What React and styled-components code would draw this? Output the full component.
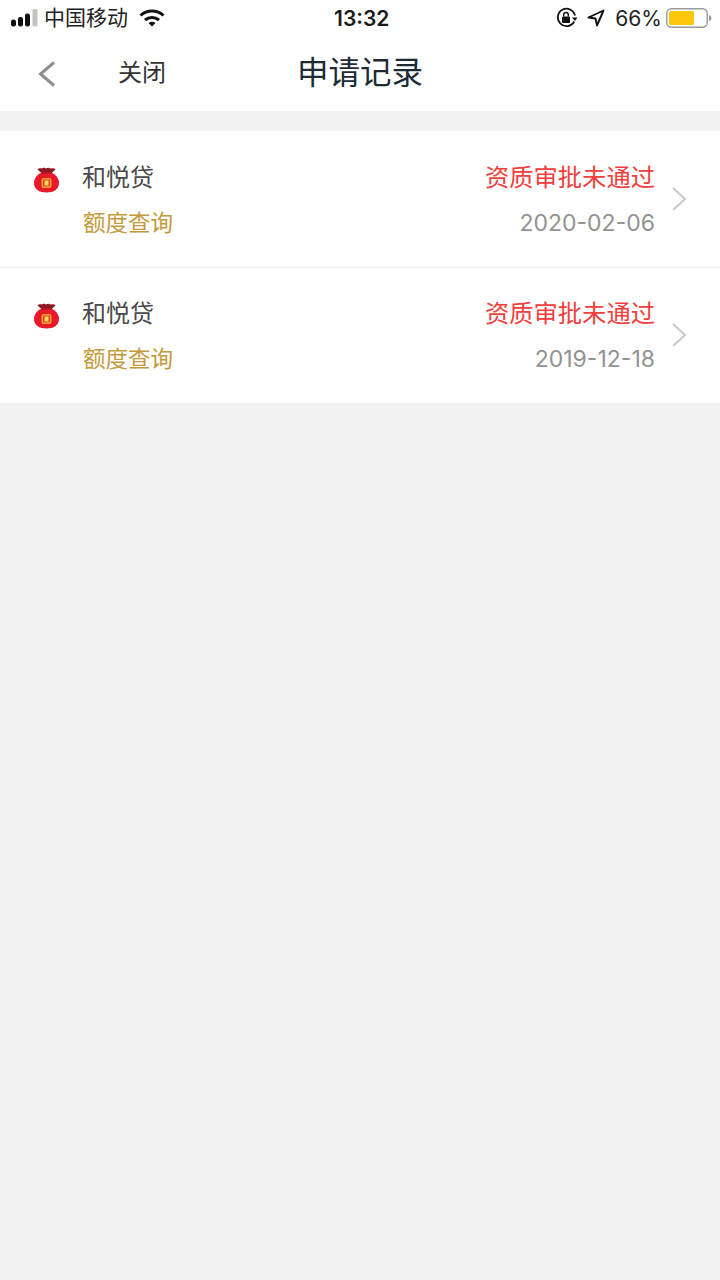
import React from "react";
import styled, { createGlobalStyle } from "styled-components";

const GlobalStyle = createGlobalStyle`
  html, body {
    margin: 0;
    padding: 0;
    background: #f2f2f2;
  }
  body {
    font-family: "Liberation Sans", "Noto Sans CJK SC", sans-serif;
  }
`;

const Page = styled.div`
  width: 720px;
  height: 1280px;
  background: #f2f2f2;
  overflow: hidden;
`;

const Top = styled.header`
  background: #fff;
`;

const StatusBar = styled.div`
  height: 36px;
  display: flex;
  align-items: center;
  justify-content: space-between;
  padding: 0 8px 0 10px;
  color: #111;
  position: relative;
`;

const StatusSide = styled.div`
  display: flex;
  align-items: center;
`;

const Carrier = styled.span`
  font-size: 21px;
  margin-left: 6px;
  margin-right: 11px;
  line-height: 36px;
  color: #222;
`;

const Clock = styled.span`
  font-family: Inter, "Liberation Sans", sans-serif;
  font-size: 21px;
  font-weight: 600;
  line-height: 25px;
  color: #1a1a1a;
  position: absolute;
  left: 334px;
  top: 6px;
`;

const Percent = styled.span`
  font-family: Inter, "Liberation Sans", sans-serif;
  font-size: 21px;
  margin: 0 4px 0 10px;
  color: #222;
`;

const NavBar = styled.nav`
  height: 75px;
  display: flex;
  align-items: center;
  position: relative;
`;

const BackButton = styled.div`
  width: 118px;
  padding-left: 37px;
  box-sizing: border-box;
  display: flex;
  align-items: center;
`;

const CloseText = styled.span`
  font-size: 24px;
  color: #333;
  position: relative;
  top: -3px;
`;

const Title = styled.h1`
  position: absolute;
  left: 297px;
  top: 15px;
  margin: 0;
  font-size: 31.5px;
  line-height: 44px;
  font-weight: 400;
  color: #1c2b36;
`;

const List = styled.section`
  margin-top: 20px;
  background: #fff;
`;

const Row = styled.div`
  height: 136px;
  box-sizing: border-box;
  display: flex;
  align-items: flex-start;
  padding: 24px 33px 0 34px;

  & + & {
    border-top: 1px solid #f0f0f0;
    padding-top: 23px;
  }
`;

const IconWrap = styled.div`
  width: 25px;
  height: 26px;
  margin-top: 12px;
  margin-right: 23px;
  flex: none;
`;

const Info = styled.div`
  flex: 1;
`;

const Name = styled.div`
  font-size: 24px;
  line-height: 46px;
  color: #4a4a4a;
`;

const Kind = styled.div`
  font-size: 22.5px;
  line-height: 46px;
  color: #c49a3c;
  margin-left: 1px;
`;

const Result = styled.div`
  text-align: right;
  margin-right: 16px;
`;

const Status = styled.div`
  font-size: 24.3px;
  line-height: 46px;
  color: #f0403c;
`;

const DateText = styled.div`
  font-family: Inter, "Liberation Sans", sans-serif;
  font-size: 23px;
  line-height: 45px;
  color: #929292;
`;

const ArrowWrap = styled.div`
  width: 16px;
  height: 26px;
  margin-top: 31px;
  flex: none;
`;

function SignalIcon() {
  return (
    <svg width="28" height="20" viewBox="0 0 28 20">
      <rect x="1" y="11.5" width="5" height="7" rx="2.2" fill="#111" />
      <rect x="8" y="9" width="5" height="9.5" rx="2.2" fill="#111" />
      <rect x="15" y="5.5" width="5" height="13" rx="2.2" fill="#111" />
      <rect x="22.5" y="1" width="5" height="17.5" rx="1.5" fill="#c4c4c4" />
    </svg>
  );
}

function WifiIcon() {
  return (
    <svg width="26" height="20" viewBox="0 0 26 20" fill="none" stroke="#111">
      <path d="M1.5 7.5C8 1.5 18 1.5 24.5 7.5" strokeWidth="3" />
      <path d="M6 12C10 8.5 16 8.5 20 12" strokeWidth="3" />
      <path d="M9.5 15 13 18.5 16.5 15C14.5 13.4 11.5 13.4 9.5 15Z" fill="#111" stroke="none" />
    </svg>
  );
}

function RotationLockIcon() {
  return (
    <svg width="22" height="22" viewBox="0 0 22 22" fill="none">
      <path d="M18.2 14.5A8.7 8.7 0 1 1 19 8.5" stroke="#111" strokeWidth="1.8" />
      <path d="M16 10.5h5.5L19 14Z" fill="#111" />
      <rect x="6" y="9.5" width="8" height="6.5" rx="1" fill="#111" />
      <path d="M7.700 9.500V7.800a2.300 2.300 0 0 1 4.600 0v1.700" stroke="#111" strokeWidth="1.4" />
    </svg>
  );
}

function LocationIcon() {
  return (
    <svg width="18" height="18" viewBox="0 0 18 18" fill="none" style={{ marginLeft: 9 }}>
      <path d="M16.5 1.5 1.5 8.5 8.5 9.5 10 16.5Z" stroke="#111" strokeWidth="1.9" strokeLinejoin="round" />
    </svg>
  );
}

function BatteryIcon() {
  return (
    <svg width="46" height="22" viewBox="0 0 46 22">
      <rect x="0.8" y="1.8" width="40.4" height="18.4" rx="4.5" fill="#fff" stroke="#9a9a9a" strokeWidth="1.4" />
      <rect x="3" y="4" width="25" height="14" rx="1.5" fill="#fdc70c" />
      <path d="M43 8c1.6.4 2.4 1.5 2.4 3s-.8 2.6-2.4 3Z" fill="#9a9a9a" />
    </svg>
  );
}

function BackIcon() {
  return (
    <svg width="20" height="28" viewBox="0 0 20 28" fill="none">
      <path d="M17 2.5 3.5 14 17 25.5" stroke="#8e8e8e" strokeWidth="3" />
    </svg>
  );
}

function PurseIcon() {
  return (
    <svg width="25" height="26" viewBox="0 0 25 26">
      <path d="M3.500 2.500C5.500 0 7.500 2 9 1c1.500-1 2.500.8 3.500.3 1.200-.8 2.300-.8 3.500-.1 1.500.9 3.500-1.200 5.500 1.300L17 6.500H8Z" fill="#8c1a22" />
      <path d="M8 5.500C3 7.500 0 11.500 0 16c0 6.500 5.500 9.500 12.500 9.500S25 22.500 25 16c0-4.500-3-8.500-8-10.500Z" fill="#e8192c" />
      <rect x="7.500" y="5" width="10" height="1.500" fill="#a8141f" />
      <rect x="7.500" y="11" width="10" height="10" rx="2" fill="#f7a820" />
      <rect x="9" y="12.500" width="7" height="7" fill="#e8412c" />
      <rect x="10.500" y="13.500" width="4" height="5" fill="#fbd35c" />
    </svg>
  );
}

function ArrowIcon() {
  return (
    <svg width="16" height="26" viewBox="0 0 16 26" fill="none">
      <path d="M2 2 14 13 2 24" stroke="#c9c9c9" strokeWidth="2" />
    </svg>
  );
}

const records = [
  { name: "和悦贷", kind: "额度查询", status: "资质审批未通过", date: "2020-02-06" },
  { name: "和悦贷", kind: "额度查询", status: "资质审批未通过", date: "2019-12-18" },
];

export default function App() {
  return (
    <>
      <GlobalStyle />
      <Page>
        <Top>
          <StatusBar>
            <StatusSide>
              <SignalIcon />
              <Carrier>中国移动</Carrier>
              <WifiIcon />
            </StatusSide>
            <Clock>13:32</Clock>
            <StatusSide>
              <RotationLockIcon />
              <LocationIcon />
              <Percent>66%</Percent>
              <BatteryIcon />
            </StatusSide>
          </StatusBar>
          <NavBar>
            <BackButton>
              <BackIcon />
            </BackButton>
            <CloseText>关闭</CloseText>
            <Title>申请记录</Title>
          </NavBar>
        </Top>
        <List>
          {records.map((r) => (
            <Row key={r.date}>
              <IconWrap>
                <PurseIcon />
              </IconWrap>
              <Info>
                <Name>{r.name}</Name>
                <Kind>{r.kind}</Kind>
              </Info>
              <Result>
                <Status>{r.status}</Status>
                <DateText>{r.date}</DateText>
              </Result>
              <ArrowWrap>
                <ArrowIcon />
              </ArrowWrap>
            </Row>
          ))}
        </List>
      </Page>
    </>
  );
}
